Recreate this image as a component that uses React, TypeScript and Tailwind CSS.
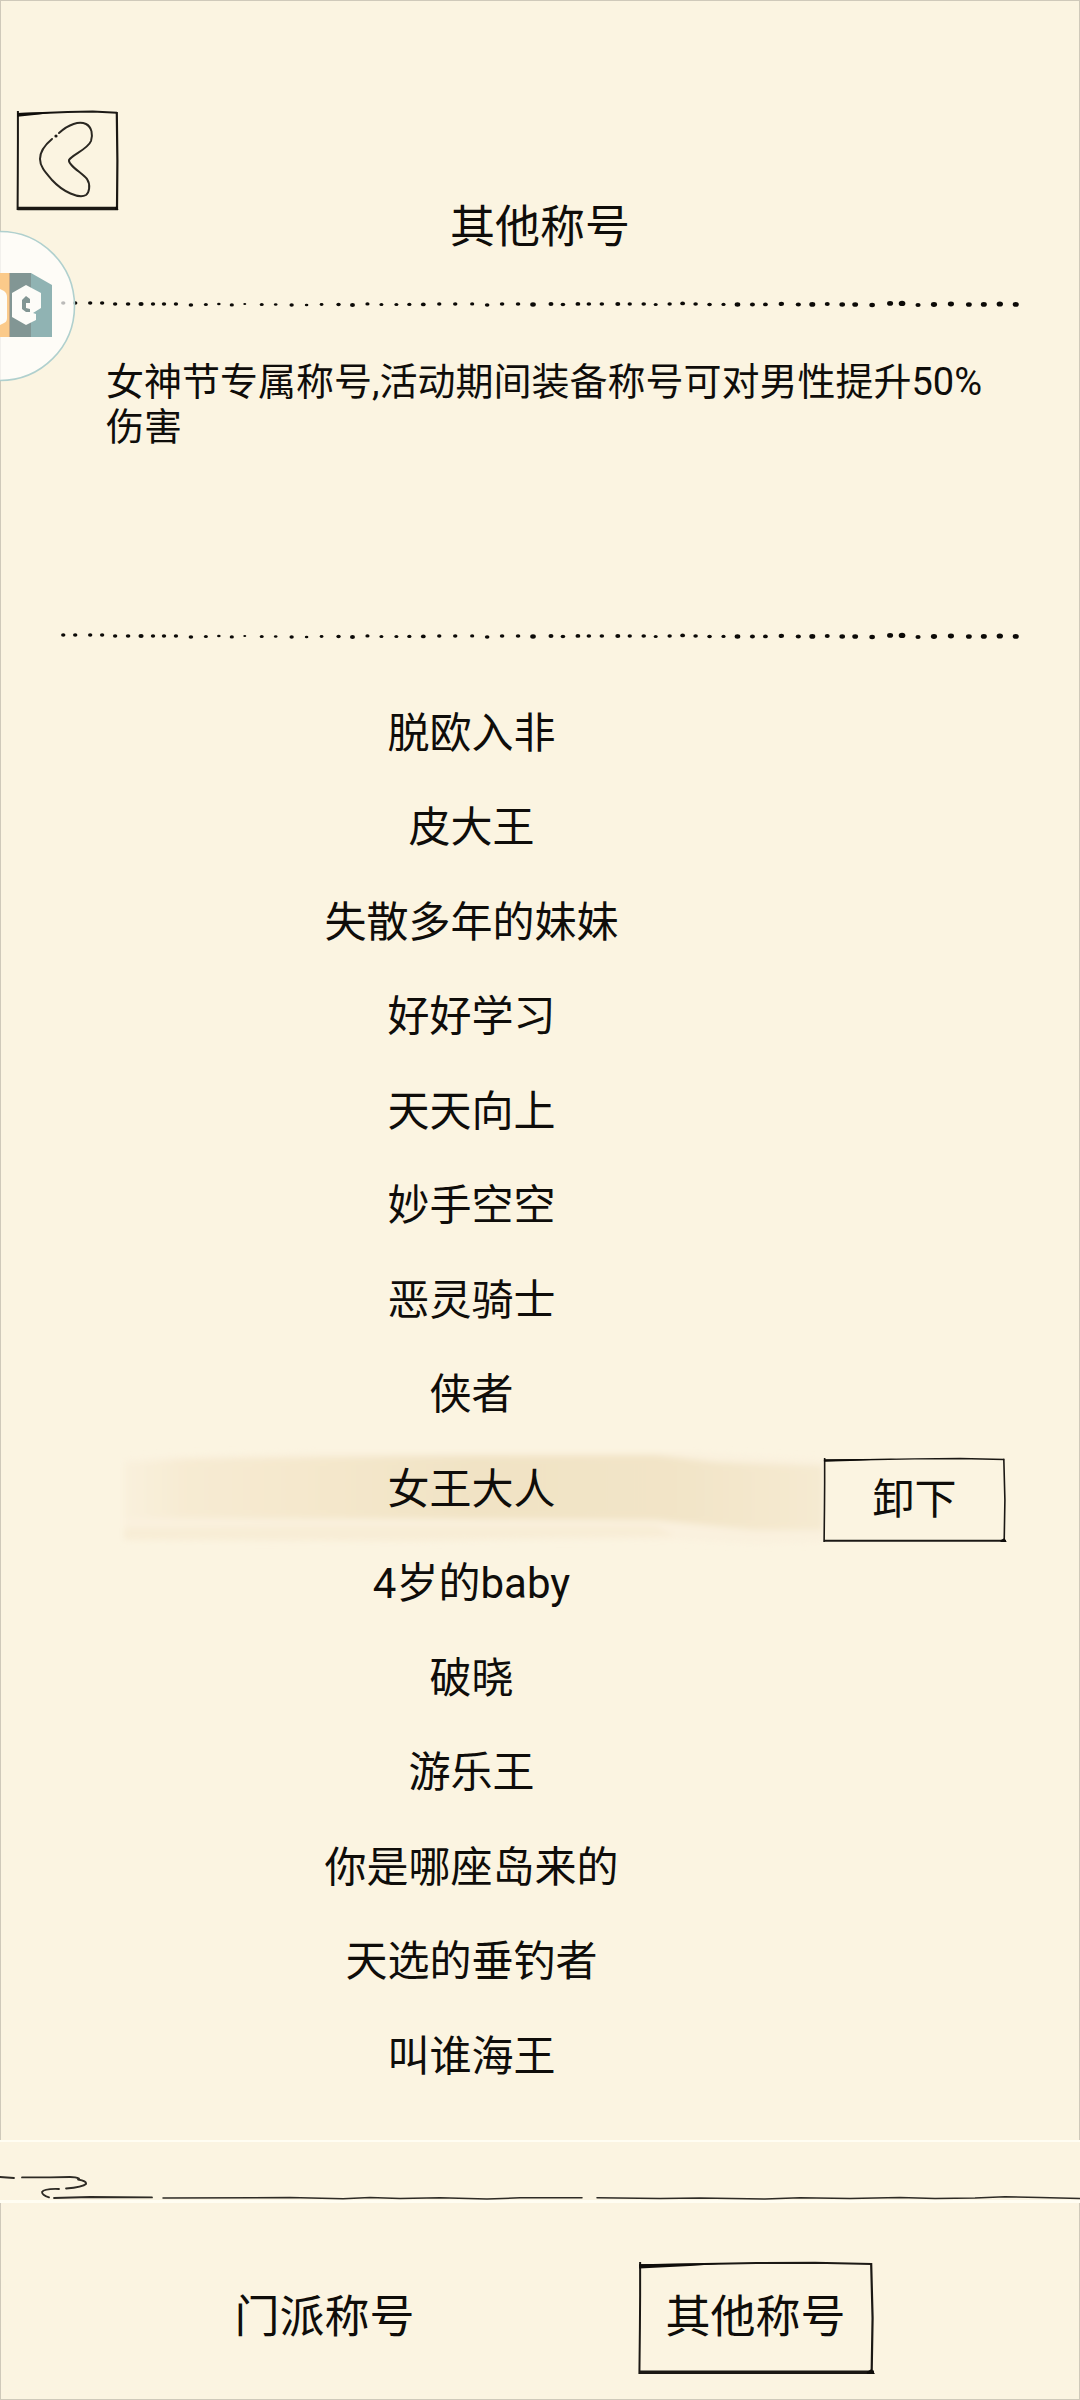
import { useState } from "react";

const titles = [
    "脱欧入非",
    "皮大王",
    "失散多年的妹妹",
    "好好学习",
    "天天向上",
    "妙手空空",
    "恶灵骑士",
    "侠者",
    "女王大人",
    "4岁的baby",
    "破晓",
    "游乐王",
    "你是哪座岛来的",
    "天选的垂钓者",
    "叫谁海王",
];

// [x, y, radius] of every ink dot in a divider
const dots: [number, number, number][] = [
    [62, 5, 2], [74, 5, 2], [89, 5, 2], [101, 5, 2], [114, 6, 2], [127, 6, 2.1], [140, 6, 2.4],
    [152, 6, 2], [163, 6, 2], [175, 6, 2], [190, 7, 2.1], [205, 6.5, 1.8], [218, 6, 1.6], [231, 7, 1.9],
    [244, 6, 1.3], [261, 6.5, 1.8], [275, 6.5, 1.6], [291, 7, 2], [306, 7, 1.6], [321, 6.5, 1.7], [338, 6.5, 2],
    [352, 7, 2.3], [367, 6, 1.9], [381, 6.5, 1.8], [396, 6.5, 1.8], [409, 6.5, 1.9], [423, 6.5, 2.2], [439, 6, 2],
    [455, 6, 2], [472, 6, 1.9], [487, 7, 2.1], [502, 6, 2.1], [518, 6, 2.1], [533, 6.5, 2.6], [551, 6, 2.3],
    [563, 6.5, 2.1], [578, 6, 2.2], [589, 6, 2.1], [602, 6, 2.1], [618, 6, 2.3], [630, 6, 2], [644, 6, 2.1],
    [656, 6.5, 1.8], [670, 6, 2], [683, 5.5, 2.2], [696, 6, 2.1], [710, 6.5, 2.1], [724, 6.5, 1.9], [738, 6.5, 2.6],
    [753, 6.5, 2.3], [766, 6.5, 2.2], [782, 6, 2.5], [799, 6.5, 2.4], [813, 6.5, 2.8], [828, 6, 2.3], [843, 6.5, 2.6],
    [856, 6.5, 2.7], [873, 7, 2.6], [891, 5.5, 2.8], [903, 5.5, 3.1], [919, 7, 2.4], [935, 6.5, 2.9], [952, 6, 2.9],
    [970, 6.5, 2.7], [985, 6.5, 2.8], [1001, 6, 3], [1017, 6.5, 2.8],
];

function DottedLine() {
    return (
        <svg viewBox="0 0 1080 12" className="block w-full" aria-hidden="true">
            {dots.map(([x, y, r], i) => (
                <ellipse key={i} cx={x} cy={y} rx={r + 0.2} ry={r * 0.85} fill="#0c0a07" />
            ))}
        </svg>
    );
}

// Ink frame that stretches with the button it sits in
function SketchFrame({ thin }: { thin?: boolean }) {
    return (
        <svg
            viewBox="0 0 100 100"
            preserveAspectRatio="none"
            className="absolute inset-0 h-full w-full overflow-visible"
            aria-hidden="true"
        >
            <g fill="none" stroke="#1b1814">
                <path d="M0.9 0V30L0.8 60L0.6 100" strokeWidth={thin ? 1.6 : 2} vectorEffect="non-scaling-stroke" />
                <path d="M98.8 1L99.4 50L99 100" strokeWidth={thin ? 1.6 : 2.2} vectorEffect="non-scaling-stroke" />
                <path d="M0.5 3L50 1L75 0.6L99 1.8" strokeWidth={thin ? 1.4 : 2} vectorEffect="non-scaling-stroke" />
                <path d="M0.5 98.5L100 98.5" strokeWidth={thin ? 2.2 : 3.4} vectorEffect="non-scaling-stroke" />
            </g>
            <path d={thin ? "M0.5 1.6L40 0.8L15 3.6L0.5 4.6Z" : "M0.5 2L40 1L22 3.6L0.5 5.8Z"} fill="#0f0d0a" />
            <path d="M97 98L99 95.5L100.4 100L97 100Z" fill="#0f0d0a" />
        </svg>
    );
}

function BackIcon() {
    return (
        <svg width="101" height="99" viewBox="0 0 101 99" fill="none" aria-hidden="true">
            <path
                d="M42 22C52 13 62 10 69 13C75 16 76 24 74 30C71 38 55 44 52 49C51 54 65 62 70 68C74 74 72 82 69 84C62 88 46 81 35 69C29 62 23 56 23 48C23 40 29 33 35 28"
                stroke="#2a2721"
                strokeWidth="2"
                strokeLinecap="round"
            />
            <circle cx="39" cy="25" r="1.6" fill="#1b1814" />
        </svg>
    );
}

function FloatingBadge() {
    return (
        <svg
            width="76"
            height="152"
            viewBox="0 0 76 152"
            className="absolute left-0 top-[230px]"
            aria-hidden="true"
        >
            <circle cx="0" cy="76" r="74.5" fill="#ffffff" fillOpacity="0.72" stroke="#b0d0ce" strokeWidth="1.6" />
            <path d="M0 43H9V107H0Z" fill="#fbca8a" />
            <path d="M9 43H10V107H9Z" fill="#c3a583" />
            <path d="M10 43H31V107H10Z" fill="#829694" />
            <path d="M31 43L52 55V107H31Z" fill="#90b3b3" />
            <path d="M0 59L4 61Q7 63 7 67V88Q7 92 4 93L0 95Z" fill="#fdfcf8" />
            <path d="M26 55L41 63V78L33 83L36 84V90L26 95L12 87V63Z" fill="#fdfcf8" />
            <path d="M26 66L30 69V73L26 73V78L30 79V82L26 82L22 79V70Z" fill="#829694" />
        </svg>
    );
}

// Pale brush stroke behind the equipped title
function BrushStroke() {
    return (
        <svg
            viewBox="0 0 708 110"
            preserveAspectRatio="none"
            className="absolute -left-1 -top-3 h-[110px] w-[calc(100%+4px)]"
            aria-hidden="true"
        >
            <defs>
                <linearGradient id="brush" x1="0" x2="1" y1="0" y2="0">
                    <stop offset="0" stopColor="#f8efd8" stopOpacity="0.4" />
                    <stop offset="0.08" stopColor="#f7ebd3" />
                    <stop offset="0.3" stopColor="#f4e7cb" />
                    <stop offset="0.5" stopColor="#f1e3c5" />
                    <stop offset="0.78" stopColor="#f2e4c7" />
                    <stop offset="1" stopColor="#f5ead1" />
                </linearGradient>
                <filter id="soft" x="-5%" y="-20%" width="110%" height="140%">
                    <feGaussianBlur stdDeviation="3" />
                </filter>
            </defs>
            <g filter="url(#soft)">
                <path d="M8 14L60 10L200 6L580 6L640 10L708 14V96L640 98L560 94L8 92Z" fill="#faf1de" />
                <path d="M8 18L70 13L300 10L540 9L600 16L708 20V84L640 84L540 74L300 73L8 72Z" fill="url(#brush)" />
                <path d="M8 82L200 80L540 80L560 90L300 95L8 94Z" fill="#f8edd6" />
            </g>
        </svg>
    );
}

function CloudLine() {
    return (
        <svg
            viewBox="0 0 1080 63"
            className="block w-full bg-[#fbf4e1]"
            fill="none"
            stroke="#2e2b25"
            strokeWidth="1.8"
            strokeLinecap="round"
            aria-hidden="true"
        >
            <rect x="0" y="0" width="1080" height="2" fill="#fffdf2" stroke="none" />
            <rect x="0" y="60" width="1080" height="3" fill="#fffdf2" stroke="none" />
            <path d="M0 37L14 38M22 37.4L50 37.4L70 37Q76 37 79 38.5M78 39.5Q87 41 86 44Q83 47 66 48.5M59 49Q44 48.5 42 52Q42 55 49 57.4M54 58L90 57L152 57.4" />
            <path d="M163 58L290 57.6L343 58.8L370 57.6L400 58.6L440 57.8L487 59L520 57.8L582 57.8" strokeWidth="1.5" />
            <path d="M597 57.8L660 58.4L700 58L765 59L800 57.8L850 58.6L900 57.6L935 58.6L975 58L1005 56.8L1040 57.6L1080 58.4" strokeWidth="1.5" />
        </svg>
    );
}

export default function App() {
    const [equipped, setEquipped] = useState<string>("女王大人");
    const [tab, setTab] = useState<string>("其他称号");

    return (
        <div className="relative flex min-h-screen flex-col bg-[#fbf4e1] font-[Roboto,'Noto_Sans_CJK_SC',sans-serif] text-[#0f0d0a]">
            <div className="flex flex-1 flex-col border-x border-t border-[#cfc9ba]">
                <header className="flex flex-col pt-[110px]">
                    <button aria-label="返回" className="relative ml-4 h-[99px] w-[101px]">
                        <SketchFrame />
                        <BackIcon />
                    </button>
                    <h1 className="-mt-3.5 text-center text-[45px] leading-[64px]">其他称号</h1>
                </header>

                <section className="mt-[38px]">
                    <DottedLine />
                    <p className="ml-[105px] mr-[75px] mt-[50px] min-h-[270px] text-[38px] leading-[45px]">
                        女神节专属称号,活动期间装备称号可对男性提升50%伤害
                    </p>
                    <DottedLine />
                </section>

                <ul className="mb-[31px] mt-[60px] flex flex-1 flex-col justify-between pl-[119px] pr-[73px]">
                    {titles.map((title) => (
                        <li key={title} className="grid h-[84px] grid-cols-[1fr_183px] items-start">
                            <button
                                className="relative text-[42px] leading-[64px]"
                                onClick={() => setEquipped(title)}
                            >
                                {equipped === title && <BrushStroke />}
                                <span className="relative">{title}</span>
                            </button>
                            {equipped === title && (
                                <button
                                    className="relative h-[84px] bg-[#fbf4e1] text-[42px] leading-[84px]"
                                    onClick={() => setEquipped("")}
                                >
                                    <SketchFrame thin />
                                    卸下
                                </button>
                            )}
                        </li>
                    ))}
                </ul>
            </div>

            <CloudLine />

            <nav className="flex justify-center gap-[195px] border-x border-b border-[#cfc9ba] pb-[25px] pt-[59px]">
                {["门派称号", "其他称号"].map((name) => (
                    <button
                        key={name}
                        className="relative h-[112px] w-[236px] text-[45px] leading-[112px]"
                        onClick={() => setTab(name)}
                    >
                        {tab === name && <SketchFrame />}
                        {name}
                    </button>
                ))}
            </nav>

            <FloatingBadge />
        </div>
    );
}
